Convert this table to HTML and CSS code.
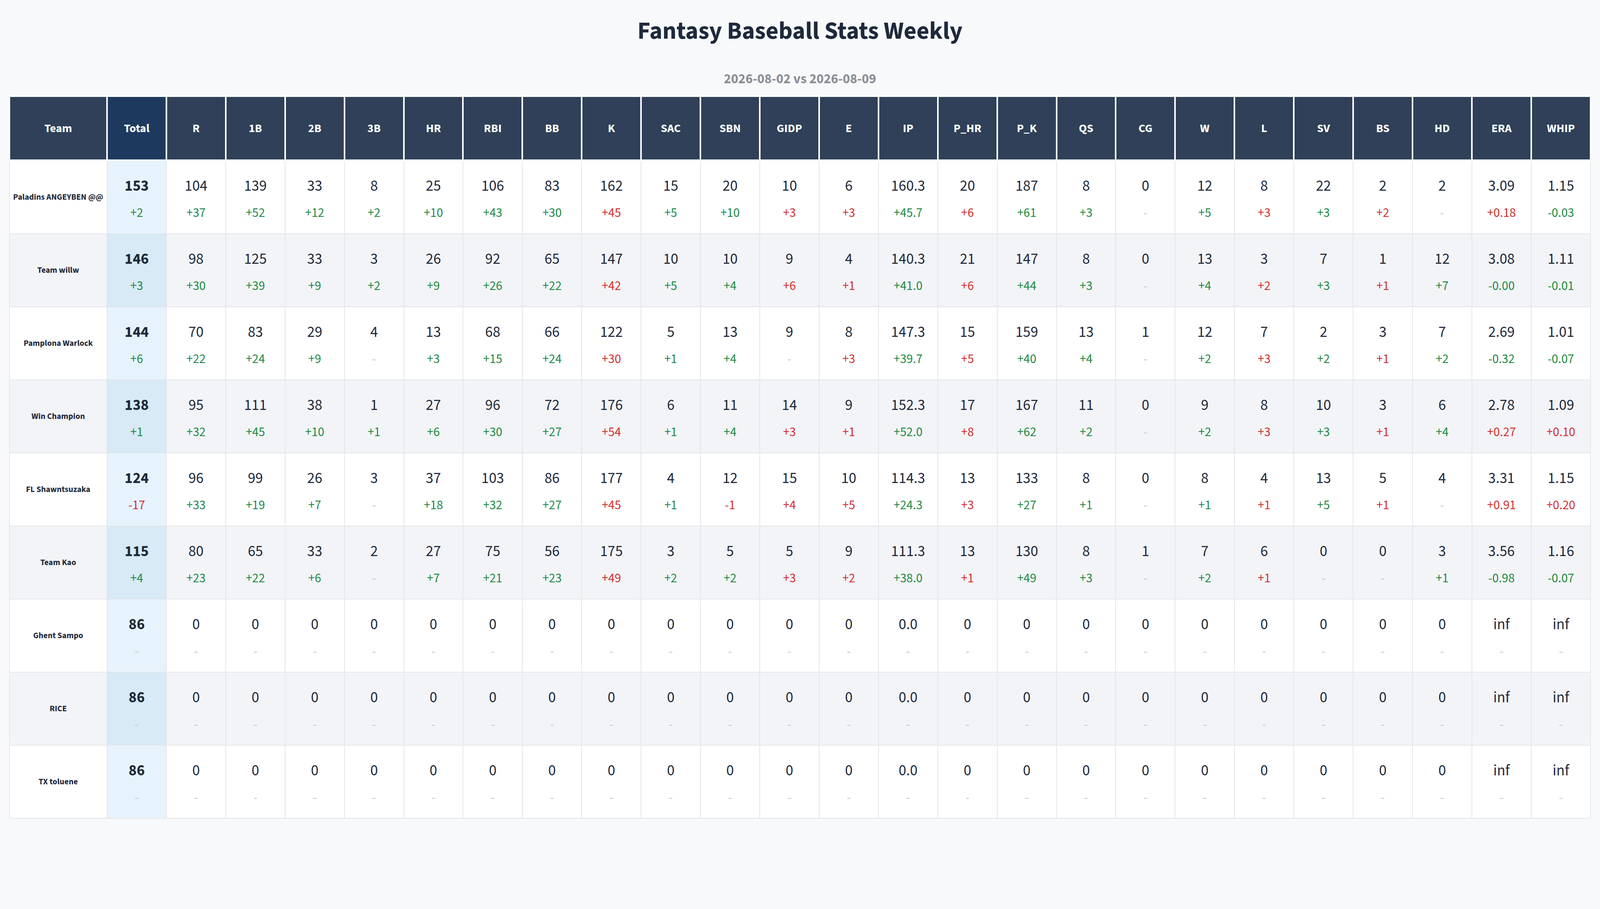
FILE: index.html
```html
<!DOCTYPE html>
<html lang="en">
<head>
<meta charset="utf-8">
<title>Fantasy Baseball Stats Weekly</title>
<link rel="stylesheet" href="styles.css">
</head>
<body>
<main class="page">
<h1 class="title">Fantasy Baseball Stats Weekly</h1>
<p class="subtitle">2026-08-02 vs 2026-08-09</p>
<table class="stats">
<colgroup><col class="c-team"><col span="25"></colgroup>
<thead>
<tr><th>Team</th><th class="tot">Total</th><th>R</th><th>1B</th><th>2B</th><th>3B</th><th>HR</th><th>RBI</th><th>BB</th><th>K</th><th>SAC</th><th>SBN</th><th>GIDP</th><th>E</th><th>IP</th><th>P_HR</th><th>P_K</th><th>QS</th><th>CG</th><th>W</th><th>L</th><th>SV</th><th>BS</th><th>HD</th><th>ERA</th><th>WHIP</th></tr>
</thead>
<tbody>
<tr><td class="team">Paladins ANGEYBEN @@</td>
<td class="tot"><div class="v">153</div><div class="d g">+2</div></td>
<td><div class="v">104</div><div class="d g">+37</div></td>
<td><div class="v">139</div><div class="d g">+52</div></td>
<td><div class="v">33</div><div class="d g">+12</div></td>
<td><div class="v">8</div><div class="d g">+2</div></td>
<td><div class="v">25</div><div class="d g">+10</div></td>
<td><div class="v">106</div><div class="d g">+43</div></td>
<td><div class="v">83</div><div class="d g">+30</div></td>
<td><div class="v">162</div><div class="d r">+45</div></td>
<td><div class="v">15</div><div class="d g">+5</div></td>
<td><div class="v">20</div><div class="d g">+10</div></td>
<td><div class="v">10</div><div class="d r">+3</div></td>
<td><div class="v">6</div><div class="d r">+3</div></td>
<td><div class="v">160.3</div><div class="d g">+45.7</div></td>
<td><div class="v">20</div><div class="d r">+6</div></td>
<td><div class="v">187</div><div class="d g">+61</div></td>
<td><div class="v">8</div><div class="d g">+3</div></td>
<td><div class="v">0</div><div class="d z">-</div></td>
<td><div class="v">12</div><div class="d g">+5</div></td>
<td><div class="v">8</div><div class="d r">+3</div></td>
<td><div class="v">22</div><div class="d g">+3</div></td>
<td><div class="v">2</div><div class="d r">+2</div></td>
<td><div class="v">2</div><div class="d z">-</div></td>
<td><div class="v">3.09</div><div class="d r">+0.18</div></td>
<td><div class="v">1.15</div><div class="d g">-0.03</div></td></tr>

<tr><td class="team">Team willw</td>
<td class="tot"><div class="v">146</div><div class="d g">+3</div></td>
<td><div class="v">98</div><div class="d g">+30</div></td>
<td><div class="v">125</div><div class="d g">+39</div></td>
<td><div class="v">33</div><div class="d g">+9</div></td>
<td><div class="v">3</div><div class="d g">+2</div></td>
<td><div class="v">26</div><div class="d g">+9</div></td>
<td><div class="v">92</div><div class="d g">+26</div></td>
<td><div class="v">65</div><div class="d g">+22</div></td>
<td><div class="v">147</div><div class="d r">+42</div></td>
<td><div class="v">10</div><div class="d g">+5</div></td>
<td><div class="v">10</div><div class="d g">+4</div></td>
<td><div class="v">9</div><div class="d r">+6</div></td>
<td><div class="v">4</div><div class="d r">+1</div></td>
<td><div class="v">140.3</div><div class="d g">+41.0</div></td>
<td><div class="v">21</div><div class="d r">+6</div></td>
<td><div class="v">147</div><div class="d g">+44</div></td>
<td><div class="v">8</div><div class="d g">+3</div></td>
<td><div class="v">0</div><div class="d z">-</div></td>
<td><div class="v">13</div><div class="d g">+4</div></td>
<td><div class="v">3</div><div class="d r">+2</div></td>
<td><div class="v">7</div><div class="d g">+3</div></td>
<td><div class="v">1</div><div class="d r">+1</div></td>
<td><div class="v">12</div><div class="d g">+7</div></td>
<td><div class="v">3.08</div><div class="d g">-0.00</div></td>
<td><div class="v">1.11</div><div class="d g">-0.01</div></td></tr>

<tr><td class="team">Pamplona Warlock</td>
<td class="tot"><div class="v">144</div><div class="d g">+6</div></td>
<td><div class="v">70</div><div class="d g">+22</div></td>
<td><div class="v">83</div><div class="d g">+24</div></td>
<td><div class="v">29</div><div class="d g">+9</div></td>
<td><div class="v">4</div><div class="d z">-</div></td>
<td><div class="v">13</div><div class="d g">+3</div></td>
<td><div class="v">68</div><div class="d g">+15</div></td>
<td><div class="v">66</div><div class="d g">+24</div></td>
<td><div class="v">122</div><div class="d r">+30</div></td>
<td><div class="v">5</div><div class="d g">+1</div></td>
<td><div class="v">13</div><div class="d g">+4</div></td>
<td><div class="v">9</div><div class="d z">-</div></td>
<td><div class="v">8</div><div class="d r">+3</div></td>
<td><div class="v">147.3</div><div class="d g">+39.7</div></td>
<td><div class="v">15</div><div class="d r">+5</div></td>
<td><div class="v">159</div><div class="d g">+40</div></td>
<td><div class="v">13</div><div class="d g">+4</div></td>
<td><div class="v">1</div><div class="d z">-</div></td>
<td><div class="v">12</div><div class="d g">+2</div></td>
<td><div class="v">7</div><div class="d r">+3</div></td>
<td><div class="v">2</div><div class="d g">+2</div></td>
<td><div class="v">3</div><div class="d r">+1</div></td>
<td><div class="v">7</div><div class="d g">+2</div></td>
<td><div class="v">2.69</div><div class="d g">-0.32</div></td>
<td><div class="v">1.01</div><div class="d g">-0.07</div></td></tr>

<tr><td class="team">Win Champion</td>
<td class="tot"><div class="v">138</div><div class="d g">+1</div></td>
<td><div class="v">95</div><div class="d g">+32</div></td>
<td><div class="v">111</div><div class="d g">+45</div></td>
<td><div class="v">38</div><div class="d g">+10</div></td>
<td><div class="v">1</div><div class="d g">+1</div></td>
<td><div class="v">27</div><div class="d g">+6</div></td>
<td><div class="v">96</div><div class="d g">+30</div></td>
<td><div class="v">72</div><div class="d g">+27</div></td>
<td><div class="v">176</div><div class="d r">+54</div></td>
<td><div class="v">6</div><div class="d g">+1</div></td>
<td><div class="v">11</div><div class="d g">+4</div></td>
<td><div class="v">14</div><div class="d r">+3</div></td>
<td><div class="v">9</div><div class="d r">+1</div></td>
<td><div class="v">152.3</div><div class="d g">+52.0</div></td>
<td><div class="v">17</div><div class="d r">+8</div></td>
<td><div class="v">167</div><div class="d g">+62</div></td>
<td><div class="v">11</div><div class="d g">+2</div></td>
<td><div class="v">0</div><div class="d z">-</div></td>
<td><div class="v">9</div><div class="d g">+2</div></td>
<td><div class="v">8</div><div class="d r">+3</div></td>
<td><div class="v">10</div><div class="d g">+3</div></td>
<td><div class="v">3</div><div class="d r">+1</div></td>
<td><div class="v">6</div><div class="d g">+4</div></td>
<td><div class="v">2.78</div><div class="d r">+0.27</div></td>
<td><div class="v">1.09</div><div class="d r">+0.10</div></td></tr>

<tr><td class="team">FL Shawntsuzaka</td>
<td class="tot"><div class="v">124</div><div class="d r">-17</div></td>
<td><div class="v">96</div><div class="d g">+33</div></td>
<td><div class="v">99</div><div class="d g">+19</div></td>
<td><div class="v">26</div><div class="d g">+7</div></td>
<td><div class="v">3</div><div class="d z">-</div></td>
<td><div class="v">37</div><div class="d g">+18</div></td>
<td><div class="v">103</div><div class="d g">+32</div></td>
<td><div class="v">86</div><div class="d g">+27</div></td>
<td><div class="v">177</div><div class="d r">+45</div></td>
<td><div class="v">4</div><div class="d g">+1</div></td>
<td><div class="v">12</div><div class="d r">-1</div></td>
<td><div class="v">15</div><div class="d r">+4</div></td>
<td><div class="v">10</div><div class="d r">+5</div></td>
<td><div class="v">114.3</div><div class="d g">+24.3</div></td>
<td><div class="v">13</div><div class="d r">+3</div></td>
<td><div class="v">133</div><div class="d g">+27</div></td>
<td><div class="v">8</div><div class="d g">+1</div></td>
<td><div class="v">0</div><div class="d z">-</div></td>
<td><div class="v">8</div><div class="d g">+1</div></td>
<td><div class="v">4</div><div class="d r">+1</div></td>
<td><div class="v">13</div><div class="d g">+5</div></td>
<td><div class="v">5</div><div class="d r">+1</div></td>
<td><div class="v">4</div><div class="d z">-</div></td>
<td><div class="v">3.31</div><div class="d r">+0.91</div></td>
<td><div class="v">1.15</div><div class="d r">+0.20</div></td></tr>

<tr><td class="team">Team Kao</td>
<td class="tot"><div class="v">115</div><div class="d g">+4</div></td>
<td><div class="v">80</div><div class="d g">+23</div></td>
<td><div class="v">65</div><div class="d g">+22</div></td>
<td><div class="v">33</div><div class="d g">+6</div></td>
<td><div class="v">2</div><div class="d z">-</div></td>
<td><div class="v">27</div><div class="d g">+7</div></td>
<td><div class="v">75</div><div class="d g">+21</div></td>
<td><div class="v">56</div><div class="d g">+23</div></td>
<td><div class="v">175</div><div class="d r">+49</div></td>
<td><div class="v">3</div><div class="d g">+2</div></td>
<td><div class="v">5</div><div class="d g">+2</div></td>
<td><div class="v">5</div><div class="d r">+3</div></td>
<td><div class="v">9</div><div class="d r">+2</div></td>
<td><div class="v">111.3</div><div class="d g">+38.0</div></td>
<td><div class="v">13</div><div class="d r">+1</div></td>
<td><div class="v">130</div><div class="d g">+49</div></td>
<td><div class="v">8</div><div class="d g">+3</div></td>
<td><div class="v">1</div><div class="d z">-</div></td>
<td><div class="v">7</div><div class="d g">+2</div></td>
<td><div class="v">6</div><div class="d r">+1</div></td>
<td><div class="v">0</div><div class="d z">-</div></td>
<td><div class="v">0</div><div class="d z">-</div></td>
<td><div class="v">3</div><div class="d g">+1</div></td>
<td><div class="v">3.56</div><div class="d g">-0.98</div></td>
<td><div class="v">1.16</div><div class="d g">-0.07</div></td></tr>

<tr><td class="team">Ghent Sampo</td>
<td class="tot"><div class="v">86</div><div class="d z">-</div></td>
<td><div class="v">0</div><div class="d z">-</div></td>
<td><div class="v">0</div><div class="d z">-</div></td>
<td><div class="v">0</div><div class="d z">-</div></td>
<td><div class="v">0</div><div class="d z">-</div></td>
<td><div class="v">0</div><div class="d z">-</div></td>
<td><div class="v">0</div><div class="d z">-</div></td>
<td><div class="v">0</div><div class="d z">-</div></td>
<td><div class="v">0</div><div class="d z">-</div></td>
<td><div class="v">0</div><div class="d z">-</div></td>
<td><div class="v">0</div><div class="d z">-</div></td>
<td><div class="v">0</div><div class="d z">-</div></td>
<td><div class="v">0</div><div class="d z">-</div></td>
<td><div class="v">0.0</div><div class="d z">-</div></td>
<td><div class="v">0</div><div class="d z">-</div></td>
<td><div class="v">0</div><div class="d z">-</div></td>
<td><div class="v">0</div><div class="d z">-</div></td>
<td><div class="v">0</div><div class="d z">-</div></td>
<td><div class="v">0</div><div class="d z">-</div></td>
<td><div class="v">0</div><div class="d z">-</div></td>
<td><div class="v">0</div><div class="d z">-</div></td>
<td><div class="v">0</div><div class="d z">-</div></td>
<td><div class="v">0</div><div class="d z">-</div></td>
<td><div class="v">inf</div><div class="d z">-</div></td>
<td><div class="v">inf</div><div class="d z">-</div></td></tr>

<tr><td class="team">RICE</td>
<td class="tot"><div class="v">86</div><div class="d z">-</div></td>
<td><div class="v">0</div><div class="d z">-</div></td>
<td><div class="v">0</div><div class="d z">-</div></td>
<td><div class="v">0</div><div class="d z">-</div></td>
<td><div class="v">0</div><div class="d z">-</div></td>
<td><div class="v">0</div><div class="d z">-</div></td>
<td><div class="v">0</div><div class="d z">-</div></td>
<td><div class="v">0</div><div class="d z">-</div></td>
<td><div class="v">0</div><div class="d z">-</div></td>
<td><div class="v">0</div><div class="d z">-</div></td>
<td><div class="v">0</div><div class="d z">-</div></td>
<td><div class="v">0</div><div class="d z">-</div></td>
<td><div class="v">0</div><div class="d z">-</div></td>
<td><div class="v">0.0</div><div class="d z">-</div></td>
<td><div class="v">0</div><div class="d z">-</div></td>
<td><div class="v">0</div><div class="d z">-</div></td>
<td><div class="v">0</div><div class="d z">-</div></td>
<td><div class="v">0</div><div class="d z">-</div></td>
<td><div class="v">0</div><div class="d z">-</div></td>
<td><div class="v">0</div><div class="d z">-</div></td>
<td><div class="v">0</div><div class="d z">-</div></td>
<td><div class="v">0</div><div class="d z">-</div></td>
<td><div class="v">0</div><div class="d z">-</div></td>
<td><div class="v">inf</div><div class="d z">-</div></td>
<td><div class="v">inf</div><div class="d z">-</div></td></tr>

<tr><td class="team">TX toluene</td>
<td class="tot"><div class="v">86</div><div class="d z">-</div></td>
<td><div class="v">0</div><div class="d z">-</div></td>
<td><div class="v">0</div><div class="d z">-</div></td>
<td><div class="v">0</div><div class="d z">-</div></td>
<td><div class="v">0</div><div class="d z">-</div></td>
<td><div class="v">0</div><div class="d z">-</div></td>
<td><div class="v">0</div><div class="d z">-</div></td>
<td><div class="v">0</div><div class="d z">-</div></td>
<td><div class="v">0</div><div class="d z">-</div></td>
<td><div class="v">0</div><div class="d z">-</div></td>
<td><div class="v">0</div><div class="d z">-</div></td>
<td><div class="v">0</div><div class="d z">-</div></td>
<td><div class="v">0</div><div class="d z">-</div></td>
<td><div class="v">0.0</div><div class="d z">-</div></td>
<td><div class="v">0</div><div class="d z">-</div></td>
<td><div class="v">0</div><div class="d z">-</div></td>
<td><div class="v">0</div><div class="d z">-</div></td>
<td><div class="v">0</div><div class="d z">-</div></td>
<td><div class="v">0</div><div class="d z">-</div></td>
<td><div class="v">0</div><div class="d z">-</div></td>
<td><div class="v">0</div><div class="d z">-</div></td>
<td><div class="v">0</div><div class="d z">-</div></td>
<td><div class="v">0</div><div class="d z">-</div></td>
<td><div class="v">inf</div><div class="d z">-</div></td>
<td><div class="v">inf</div><div class="d z">-</div></td></tr>
</tbody>
</table>
</main>
</body>
</html>
```

FILE: styles.css
```css
html, body {
  margin: 0;
  padding: 0;
  background: #f8f9fb;
}

body {
  font-family: "Source Sans Pro", "Source Sans 3", Lato, "Noto Sans", sans-serif;
  color: #1e2a3b;
}

.page {
  padding: 22px;
}

.title {
  margin: 19px 0 0;
  font-size: 63px;
  line-height: 76px;
  font-weight: 700;
  text-align: center;
  color: #1e2a3b;
}

.subtitle {
  margin: 65px 0 22px;
  font-size: 35px;
  line-height: 40px;
  font-weight: 700;
  text-align: center;
  color: #8a8f96;
}

.stats {
  width: 100%;
  border-collapse: collapse;
  table-layout: fixed;
  background: #fff;
}

.c-team {
  width: 250px;
}

.stats th {
  height: 160px;
  padding: 0;
  border: 4px solid #fff;
  background: #2f4058;
  color: #fff;
  font-size: 30px;
  font-weight: 700;
  text-align: center;
  vertical-align: middle;
}

.stats th.tot {
  background: #1d3a5e;
}

.stats td {
  height: 177px;
  padding: 8px 0 0;
  border: 2px solid #e4e6ea;
  text-align: center;
  vertical-align: middle;
  background: #fff;
}

.stats tbody tr:nth-child(even) td {
  background: #f3f4f7;
}

.stats td.tot {
  background: #e7f3fc;
}

.stats tbody tr:nth-child(even) td.tot {
  background: #d7eaf5;
}

.stats td.team {
  padding: 0;
  font-size: 21.5px;
  font-weight: 700;
  color: #1e2a3b;
}

.v {
  font-size: 39px;
  line-height: 46px;
  color: #1e2a3b;
}

.tot .v {
  font-weight: 700;
}

.d {
  margin-top: 26px;
  font-size: 33px;
  line-height: 40px;
}

.d.g {
  color: #1f8a44;
}

.d.r {
  color: #d32f2f;
}

.d.z {
  color: #c3c7cc;
}
```
